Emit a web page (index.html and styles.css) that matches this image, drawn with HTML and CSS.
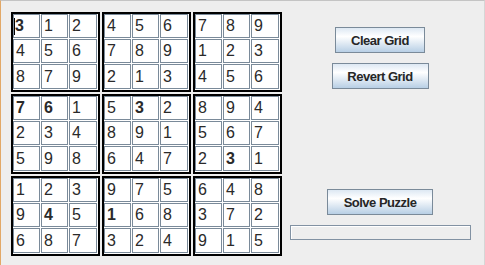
FILE: index.html
```html
<!DOCTYPE html>
<html>
<head>
<meta charset="utf-8">
<link rel="stylesheet" href="styles.css">
</head>
<body>
<div class="window">
  <div class="board">
    <div class="block">
      <div class="cell bold"><span class="caret"></span>3</div><div class="cell">1</div><div class="cell">2</div>
      <div class="cell">4</div><div class="cell">5</div><div class="cell">6</div>
      <div class="cell">8</div><div class="cell">7</div><div class="cell">9</div>
    </div>
    <div class="block">
      <div class="cell">4</div><div class="cell">5</div><div class="cell">6</div>
      <div class="cell">7</div><div class="cell">8</div><div class="cell">9</div>
      <div class="cell">2</div><div class="cell">1</div><div class="cell">3</div>
    </div>
    <div class="block">
      <div class="cell">7</div><div class="cell">8</div><div class="cell">9</div>
      <div class="cell">1</div><div class="cell">2</div><div class="cell">3</div>
      <div class="cell">4</div><div class="cell">5</div><div class="cell">6</div>
    </div>
    <div class="block">
      <div class="cell bold">7</div><div class="cell bold">6</div><div class="cell">1</div>
      <div class="cell">2</div><div class="cell">3</div><div class="cell">4</div>
      <div class="cell">5</div><div class="cell">9</div><div class="cell">8</div>
    </div>
    <div class="block">
      <div class="cell">5</div><div class="cell bold">3</div><div class="cell">2</div>
      <div class="cell">8</div><div class="cell">9</div><div class="cell">1</div>
      <div class="cell">6</div><div class="cell">4</div><div class="cell">7</div>
    </div>
    <div class="block">
      <div class="cell">8</div><div class="cell">9</div><div class="cell">4</div>
      <div class="cell">5</div><div class="cell">6</div><div class="cell">7</div>
      <div class="cell">2</div><div class="cell bold">3</div><div class="cell">1</div>
    </div>
    <div class="block">
      <div class="cell">1</div><div class="cell">2</div><div class="cell">3</div>
      <div class="cell">9</div><div class="cell bold">4</div><div class="cell">5</div>
      <div class="cell">6</div><div class="cell">8</div><div class="cell">7</div>
    </div>
    <div class="block">
      <div class="cell">9</div><div class="cell">7</div><div class="cell">5</div>
      <div class="cell bold">1</div><div class="cell">6</div><div class="cell">8</div>
      <div class="cell">3</div><div class="cell">2</div><div class="cell">4</div>
    </div>
    <div class="block">
      <div class="cell">6</div><div class="cell">4</div><div class="cell">8</div>
      <div class="cell">3</div><div class="cell">7</div><div class="cell">2</div>
      <div class="cell">9</div><div class="cell">1</div><div class="cell">5</div>
    </div>
  </div>
  <div class="side">
    <button class="btn btn-clear">Clear Grid</button>
    <button class="btn btn-revert">Revert Grid</button>
    <button class="btn btn-solve">Solve Puzzle</button>
    <div class="progress"></div>
  </div>
</div>
</body>
</html>
```

FILE: styles.css
```css
html, body {
  margin: 0;
  padding: 0;
  background: #eeeeee;
}

.window {
  box-sizing: border-box;
  width: 485px;
  height: 265px;
  background: #eeeeee;
  border-top: 1px solid #c4c4c4;
  border-left: 1px solid #e2a867;
  border-right: 1px solid #d6d6d6;
  padding: 11px 0 0 10px;
  display: flex;
}

.board {
  display: grid;
  grid-template-columns: repeat(3, 89px);
  grid-template-rows: repeat(3, 80px);
  gap: 2px;
}

.block {
  box-sizing: border-box;
  border: 2px solid #000;
  background: #fff;
  display: grid;
  grid-template-columns: 28px 28px 29px;
  grid-template-rows: 25px 25px 26px;
}

.cell {
  border: 1px solid #7a8a99;
  margin: 0 1px 1px 0;
  background: #fff;
  display: flex;
  align-items: center;
  padding-left: 2px;
  font-family: "Liberation Sans", Arial, sans-serif;
  font-size: 16px;
  color: #2a2a2a;
  line-height: 1;
}

.bold {
  font-weight: bold;
}

.caret {
  display: inline-block;
  width: 1px;
  height: 17px;
  background: #000;
  margin-left: -2px;
  margin-right: 0;
}

.side {
  flex: 1;
  padding-right: 6px;
  display: flex;
  flex-direction: column;
  align-items: center;
}

.btn {
  box-sizing: border-box;
  height: 26px;
  padding: 0;
  border: 1px solid #7a8a99;
  background: linear-gradient(to bottom, #dde8f3 0%, #ffffff 35%, #b8cfe5 100%);
  font-family: "Liberation Sans", Arial, sans-serif;
  font-weight: bold;
  font-size: 13px;
  letter-spacing: -0.5px;
  color: #262626;
  text-align: center;
}

.btn-clear {
  width: 90px;
  margin-top: 15px;
}

.btn-revert {
  width: 97px;
  margin-top: 10px;
}

.btn-solve {
  width: 106px;
  margin-top: 100px;
}

.progress {
  box-sizing: border-box;
  width: 181px;
  height: 15px;
  margin-top: 10px;
  border: 1px solid #8292a3;
  background: #eeeeee;
  box-shadow: inset 1px 1px 0 #ffffff;
}
```
